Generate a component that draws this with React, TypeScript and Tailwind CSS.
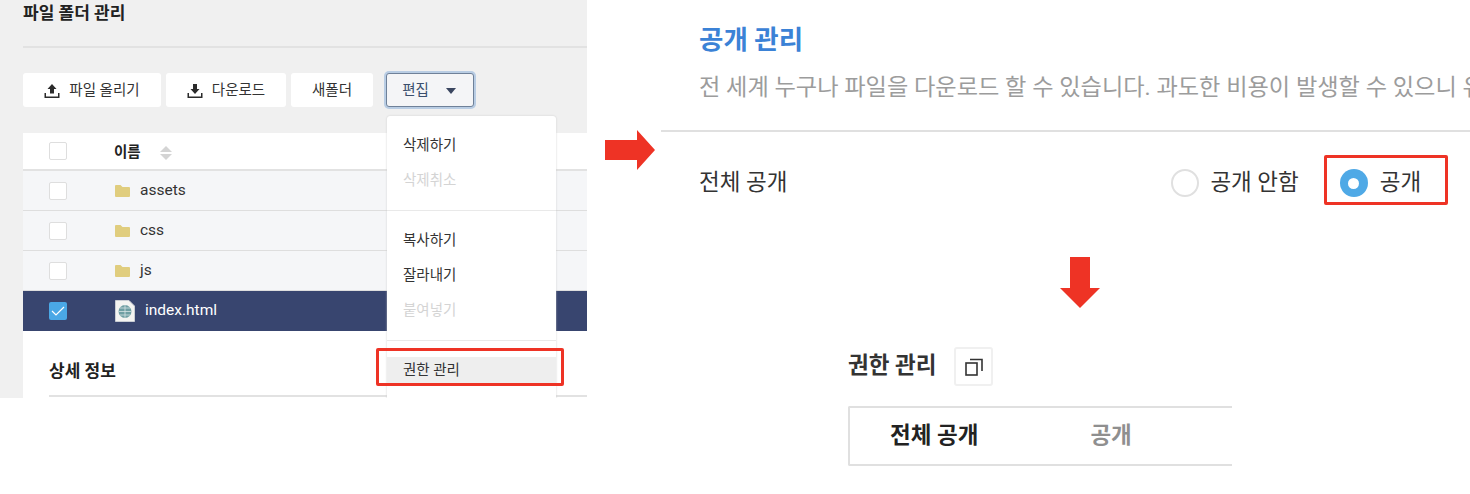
import clsx from 'clsx';

const rows = ['assets', 'css', 'js'];

function UploadIcon() {
  return (
    <svg width="16" height="16" viewBox="0 0 16 16" className="shrink-0" fill="#2b2b2b">
      <path d="M8 1 L12.5 6 H10 V10.5 H6 V6 H3.5 Z" />
      <path d="M0.5 10 H2 V13.5 H14 V10 H15.5 V15 H0.5 Z" />
    </svg>
  );
}

function DownloadIcon() {
  return (
    <svg width="16" height="16" viewBox="0 0 16 16" className="shrink-0" fill="#2b2b2b">
      <path d="M6 1 H10 V6 H12.5 L8 11 L3.5 6 H6 Z" />
      <path d="M0.5 10 H2 V13.5 H14 V10 H15.5 V15 H0.5 Z" />
    </svg>
  );
}

function Folder() {
  return (
    <svg width="15" height="12" viewBox="0 0 15 12" className="shrink-0">
      <path d="M0 1 Q0 0 1 0 H5.5 L7.5 2 H14 Q15 2 15 3 V11 Q15 12 14 12 H1 Q0 12 0 11 Z" fill="#e0cd7e" />
    </svg>
  );
}

function HtmlFile() {
  return (
    <svg width="20" height="22" viewBox="0 0 20 22" className="shrink-0">
      <path d="M0.5 0.5 H14 L19.5 6 V21.5 H0.5 Z" fill="#f4f4f1" stroke="#c9cdd3" />
      <circle cx="10" cy="11.5" r="6.5" fill="#6f9fa3" />
      <path d="M10 5 V18 M3.5 11.5 H16.5 M5 8 H15 M5 15 H15" stroke="#d5e3e3" strokeWidth="0.8" />
    </svg>
  );
}

function Checkbox({ checked }: { checked?: boolean }) {
  return (
    <div
      className={clsx(
        'flex h-[18px] w-[18px] shrink-0 items-center justify-center rounded-[2px]',
        checked ? 'bg-[#4aa8e6]' : 'border border-[#dedede] bg-white',
      )}
    >
      {checked && (
        <svg width="14" height="10" viewBox="0 0 14 10">
          <path d="M1 5 L5 9 L13 1" fill="none" stroke="#fff" strokeWidth="1.2" />
        </svg>
      )}
    </div>
  );
}

function ToolButton({ icon, label, width }: { icon?: React.ReactNode; label: string; width: string }) {
  return (
    <button className={clsx('flex h-[34px] items-center justify-center gap-[9px] rounded-[3px] bg-white pt-px text-[14.5px] text-[#333]', width)}>
      {icon}
      {label}
    </button>
  );
}

function MenuItem({ label, disabled }: { label: string; disabled?: boolean }) {
  return (
    <div className={clsx('flex h-[35px] items-center pl-[16px] text-[14.5px]', disabled ? 'text-[#d4d4d4]' : 'text-[#333]')}>
      {label}
    </div>
  );
}

function FilePanel() {
  return (
    <div className="relative h-[398px] w-[587px] shrink-0 overflow-hidden bg-[#f0f0f0] pl-[23px]">
      <h1 className="mt-[2px] h-[22px] text-[17px] leading-[22px] font-bold text-[#222]">파일 폴더 관리</h1>
      <div className="mt-[22px] h-[2px] bg-[#e2e2e2]" />

      {/* Toolbar */}
      <div className="mt-[25px] flex items-center gap-[5px]">
        <ToolButton width="w-[138px]" label="파일 올리기" icon={<UploadIcon />} />
        <ToolButton width="w-[120px]" label="다운로드" icon={<DownloadIcon />} />
        <ToolButton width="w-[82px]" label="새폴더" />
        <button className="ml-[8px] flex h-[34px] w-[88px] items-center justify-center gap-[17px] rounded-[3px] border border-[#6f8199] bg-[#f4f5f7] pt-px pr-[2px] text-[14.5px] text-[#3a4f6e] shadow-[0_0_0_2px_#b9cde4]">
          편집
          <span className="h-0 w-0 border-x-[5px] border-t-[6px] border-x-transparent border-t-[#3a4660]" />
        </button>
      </div>

      {/* File table */}
      <div className="mt-[26px]">
        <div className="flex h-[38px] items-center border-b-2 border-[#e2e2e2] bg-white pl-[26px] text-[14.5px] font-bold text-[#222]">
          <Checkbox />
          <span className="ml-[47px] pt-[3px]">이름</span>
          <span className="ml-[19px] flex flex-col gap-[2px] pt-[3px]">
            <span className="h-0 w-0 border-x-[6px] border-b-[6px] border-x-transparent border-b-[#d4d4d4]" />
            <span className="h-0 w-0 border-x-[6px] border-t-[6px] border-x-transparent border-t-[#d4d4d4]" />
          </span>
        </div>
        {rows.map((name) => (
          <div key={name} className="flex h-[40px] items-center border-b border-[#dedede] bg-[#f5f6f8] pl-[26px] text-[15.5px] text-[#333]">
            <Checkbox />
            <span className="ml-[48px]"><Folder /></span>
            <span className="ml-[10px]">{name}</span>
          </div>
        ))}
        <div className="flex h-[40px] items-center bg-[#38456f] pl-[26px] text-[15.5px] text-white">
          <Checkbox checked />
          <span className="ml-[48px]"><HtmlFile /></span>
          <span className="ml-[10px]">index.html</span>
        </div>
        <div className="h-[70px] bg-white pt-[28px] pl-[26px]">
          <h2 className="text-[17px] leading-[24px] font-bold text-[#222]">상세 정보</h2>
          <div className="mt-[12px] h-[2px] bg-[#e2e2e2]" />
        </div>
      </div>

      {/* Edit dropdown */}
      <div className="absolute top-[116px] left-[387px] h-[290px] w-[169px] rounded-[3px] bg-white shadow-[0_0_2px_#c8c8c8]">
        <div className="h-[95px] border-b border-[#e9e9e9] pt-[12px]">
          <MenuItem label="삭제하기" />
          <MenuItem label="삭제취소" disabled />
        </div>
        <div className="h-[130px] border-b border-[#e9e9e9] pt-[12px]">
          <MenuItem label="복사하기" />
          <MenuItem label="잘라내기" />
          <MenuItem label="붙여넣기" disabled />
        </div>
        <div className="mt-[16px] flex h-[26px] items-center bg-[#eeeeee] pt-px pl-[16px] text-[14.5px] text-[#333]">권한 관리</div>
      </div>
      <div className="absolute top-[348px] left-[376px] h-[38px] w-[188px] rounded-[2px] border-[3px] border-[#ee3325]" />
    </div>
  );
}

function SettingsPanel() {
  return (
    <div className="relative h-[494px] flex-1 overflow-hidden">
      <div className="pt-[22px] pl-[112px]">
        <h2 className="text-[26.5px] leading-[36px] font-bold text-[#3b82d6]">공개 관리</h2>
        <p className="mt-[14px] text-[23.2px] leading-[30px] whitespace-nowrap text-[#9c9c9c]">
          전 세계 누구나 파일을 다운로드 할 수 있습니다. 과도한 비용이 발생할 수 있으니 유
        </p>
      </div>
      <div className="mt-[28px] ml-[74px] h-[2px] bg-[#e0e0e0]" />

      <div className="mt-[31px] flex h-[40px] items-center pl-[112px] text-[22.5px] text-[#333]">
        <span>전체 공개</span>
        <div className="ml-[384px] flex items-center gap-[11px]">
          <span className="h-[28px] w-[28px] rounded-full border-2 border-[#e0e0e0]" />
          공개 안함
        </div>
        <div className="ml-[41px] flex items-center gap-[12px]">
          <span className="flex h-[28px] w-[28px] items-center justify-center rounded-full bg-[#4fa9e6]">
            <span className="h-[11px] w-[11px] rounded-full bg-white" />
          </span>
          공개
        </div>
      </div>
      <div className="absolute top-[155px] left-[737px] h-[50px] w-[124px] rounded-[2px] border-[3px] border-[#ee3325]" />

      <div className="mt-[144px] ml-[261px] w-[384px]">
        <div className="flex items-center">
          <h3 className="mb-[4px] text-[22.5px] leading-[30px] font-bold text-[#333]">권한 관리</h3>
          <button className="ml-[18px] flex h-[39px] w-[39px] items-center justify-center rounded-[3px] border-2 border-[#f0f0f0]">
            <svg width="18" height="18" viewBox="0 0 18 18" fill="none" stroke="#333" strokeWidth="1.6">
              <rect x="1" y="5" width="11" height="12" />
              <path d="M5 1.5 H17 V13" />
            </svg>
          </button>
        </div>
        <div className="mt-[20px] flex h-[60px] items-center rounded-l-[2px] border-y-2 border-l-2 border-[#e0e0e0] text-[22.5px]">
          <span className="ml-[40px] font-bold text-[#222]">전체 공개</span>
          <span className="ml-[112px] font-bold text-[#8f8f8f]">공개</span>
        </div>
      </div>

      {/* Red arrows */}
      <svg width="52" height="41" viewBox="0 0 52 41" className="absolute top-[130px] left-[16px]">
        <path d="M2 10 H34 V0 L52 20 L34 40 V30 H2 Z" fill="#ee3325" />
      </svg>
      <svg width="42" height="52" viewBox="0 0 42 52" className="absolute top-[257px] left-[472px]">
        <path d="M11 0 H31 V31 H41 L21 51 L1 31 H11 Z" fill="#ee3325" />
      </svg>
    </div>
  );
}

export default function App() {
  return (
    <div className="flex h-[494px] w-[1470px] items-start overflow-hidden bg-white font-['Roboto','Noto_Sans_CJK_KR',sans-serif]">
      <FilePanel />
      <SettingsPanel />
    </div>
  );
}
